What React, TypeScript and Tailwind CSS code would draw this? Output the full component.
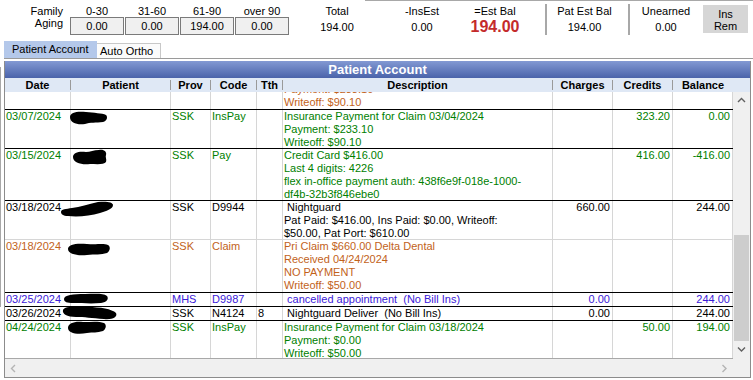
import React from "react";

interface RowData {
  h: string;
  border: string;
  color: string;
  date?: string;
  prov?: string;
  code?: string;
  tth?: string;
  desc: string[];
  charges?: string;
  credits?: string;
  balance?: string;
  blob?: React.ReactNode;
  partial?: boolean;
}

function Blob({ cls, w, h, d }: { cls: string; w: number; h: number; d: string }) {
  return (
    <svg className={`absolute ${cls}`} width={w} height={h} viewBox={`0 0 ${w} ${h}`}>
      <path d={d} fill="#000" />
    </svg>
  );
}

const G = "text-[#008000]";
const O = "text-[#c2621a]";
const B = "text-[#3a20d8]";
const K = "text-black";
const BLACK = "border-b border-black";
const GRAY = "border-b border-[#d6d6d6]";

const rows: RowData[] = [
  { h: "h-[18px]", border: BLACK, color: O, desc: ["Payment: $233.10", "Writeoff: $90.10"], partial: true },
  {
    h: "h-[39px]", border: BLACK, color: G, date: "03/07/2024", prov: "SSK", code: "InsPay",
    desc: ["Insurance Payment for Claim 03/04/2024", "Payment: $233.10", "Writeoff: $90.10"],
    credits: "323.20", balance: "0.00",
    blob: <Blob cls="left-[-3px] top-[1px]" w={40} h={14} d="M2,6 C2,1 10,0 18,1 C26,2 34,2 38,4 C40,6 39,10 35,11 C28,12 22,11 17,13 C9,14 2,12 2,6 Z" />,
  },
  {
    h: "h-[52px]", border: BLACK, color: G, date: "03/15/2024", prov: "SSK", code: "Pay",
    desc: ["Credit Card $416.00", "Last 4 digits: 4226", "flex in-office payment auth: 438f6e9f-018e-1000-", "df4b-32b3f846ebe0"],
    credits: "416.00", balance: "-416.00",
    blob: <Blob cls="left-[1px] top-[0px]" w={36} h={17} d="M1,8 C1,3 8,2 14,3 C18,3 22,1 27,1 C32,0 35,3 34,6 C33,8 35,10 34,13 C32,16 24,15 18,15 C10,16 1,14 1,8 Z" />,
  },
  {
    h: "h-[39px]", border: GRAY, color: K, date: "03/18/2024", prov: "SSK", code: "D9944",
    desc: [" Nightguard", "Pat Paid: $416.00, Ins Paid: $0.00, Writeoff:", "$50.00, Pat Port: $610.00"],
    charges: "660.00", balance: "244.00",
    blob: <Blob cls="left-[-11px] top-[0px]" w={54} h={16} d="M1,11 C1,8 6,8 12,7 C20,6 28,3 38,1 C46,0 53,1 53,4 C53,8 46,10 40,12 C30,15 18,16 8,15 C3,15 1,13 1,11 Z" />,
  },
  {
    h: "h-[53px]", border: BLACK, color: O, date: "03/18/2024", prov: "SSK", code: "Claim",
    desc: ["Pri Claim $660.00 Delta Dental", "Received 04/24/2024", "NO PAYMENT", "Writeoff: $50.00"],
    blob: <Blob cls="left-[-4px] top-[2px]" w={44} h={14} d="M1,7 C1,2 10,1 20,2 C30,3 36,1 41,3 C44,5 43,9 40,11 C34,13 28,12 20,13 C10,14 1,12 1,7 Z" />,
  },
  {
    h: "h-[14px]", border: BLACK, color: B, date: "03/25/2024", prov: "MHS", code: "D9987",
    desc: [" cancelled appointment  (No Bill Ins)"], charges: "0.00", balance: "244.00",
    blob: <Blob cls="left-[-8px] top-[0px]" w={46} h={11} d="M1,6 C1,2 10,1 22,1 C32,1 40,0 44,3 C46,6 44,9 38,10 C28,11 18,10 10,10 C4,10 1,9 1,6 Z" />,
  },
  {
    h: "h-[14px]", border: BLACK, color: K, date: "03/26/2024", prov: "SSK", code: "N4124", tth: "8",
    desc: [" Nightguard Deliver  (No Bill Ins)"], charges: "0.00", balance: "244.00",
    blob: <Blob cls="left-[-9px] top-[-2px]" w={56} h={16} d="M1,5 C2,1 14,1 26,2 C38,2 50,4 54,8 C56,12 50,15 42,14 C30,13 22,12 14,12 C5,12 0,9 1,5 Z" />,
  },
  {
    h: "flex-1 min-h-0", border: "", color: G, date: "04/24/2024", prov: "SSK", code: "InsPay",
    desc: ["Insurance Payment for Claim 03/18/2024", "Payment: $0.00", "Writeoff: $50.00"],
    credits: "50.00", balance: "194.00",
    blob: <Blob cls="left-[-4px] top-[-1px]" w={40} h={15} d="M1,8 C1,3 8,1 16,2 C24,2 32,1 37,3 C40,5 39,9 36,11 C30,13 26,12 20,13 C10,15 1,13 1,8 Z" />,
  },
];

const cell = "shrink-0 border-r border-[#d6d6d6] pl-px overflow-hidden whitespace-pre";
const num = "shrink-0 border-r border-[#d6d6d6] pr-[2px] overflow-hidden whitespace-pre text-right";

function Row({ r }: { r: RowData }) {
  return (
    <div className={`flex shrink-0 overflow-visible ${r.h} ${r.border} ${r.color}`}>
      <div className={`w-[66px] ${cell}`}>{r.date}</div>
      <div className="w-[100px] shrink-0 border-r border-[#d6d6d6] relative">{r.blob}</div>
      <div className={`w-[40px] ${cell}`}>{r.prov}</div>
      <div className={`w-[46px] ${cell}`}>{r.code}</div>
      <div className={`w-[26px] ${cell}`}>{r.tth}</div>
      <div className={`w-[270px] ${cell} ${r.partial ? "flex flex-col justify-end" : ""}`}>
        {r.desc.map((l, i) => (
          <div key={i}>{l}</div>
        ))}
      </div>
      <div className={`w-[60px] ${num}`}>{r.charges}</div>
      <div className={`w-[60px] ${num}`}>{r.credits}</div>
      <div className={`w-[60px] ${num}`}>{r.balance}</div>
    </div>
  );
}

function HCell({ w, label, sep = true }: { w: string; label: string; sep?: boolean }) {
  return (
    <div className={`${w} shrink-0 flex items-center`}>
      <div className="flex-1 text-center">{label}</div>
      {sep && <div className="w-px h-[10px] bg-[#9a9a9a]" />}
    </div>
  );
}

function Chevron({ dir, color }: { dir: "up" | "down" | "left" | "right"; color: string }) {
  const pts =
    dir === "up" ? "1,5 4.5,1.5 8,5" : dir === "down" ? "1,1.5 4.5,5 8,1.5" : dir === "left" ? "5,1 1.5,4.5 5,8" : "1.5,1 5,4.5 1.5,8";
  const w = dir === "up" || dir === "down" ? 9 : 7;
  const h = dir === "up" || dir === "down" ? 7 : 9;
  return (
    <svg width={w} height={h} viewBox={`0 0 ${w} ${h}`}>
      <polyline points={pts} fill="none" stroke={color} strokeWidth="1.4" />
    </svg>
  );
}

function AgeCol({ label, value }: { label: string; value: string }) {
  return (
    <div className="w-[55px] flex flex-col items-start">
      <div className="w-[54px] text-center pt-[5px] leading-[12px]">{label}</div>
      <div className="w-[54px] h-[18px] border border-[#7a7a7a] bg-[#f0f0f0] text-center leading-[16px]">{value}</div>
    </div>
  );
}

export default function App() {
  return (
    <div className="w-[753px] h-[380px] overflow-hidden bg-white text-black text-[11px] font-['Liberation_Sans',Arial,sans-serif] flex flex-col">
      {/* Summary strip */}
      <div className="relative h-[40px] shrink-0 flex">
        <div className="absolute left-[365px] right-0 top-0 h-px bg-[#a8a8a8]" />
        <div className="w-[63px] text-right pt-[5px] leading-[12px]">
          <div>Family</div>
          <div>Aging</div>
        </div>
        <div className="ml-[7px] w-[220px] flex">
          <AgeCol label="0-30" value="0.00" />
          <AgeCol label="31-60" value="0.00" />
          <AgeCol label="61-90" value="194.00" />
          <AgeCol label="over 90" value="0.00" />
        </div>
        <div className="w-[94px] text-center pt-[5px] leading-[12px]">
          <div>Total</div>
          <div className="mt-[4px]">194.00</div>
        </div>
        <div className="w-[76px] text-center pt-[5px] leading-[12px]">
          <div>-InsEst</div>
          <div className="mt-[4px]">0.00</div>
        </div>
        <div className="w-[70px] text-center pt-[5px] leading-[12px]">
          <div>=Est Bal</div>
          <div className="mt-px text-[16px] leading-[18px] font-bold text-[#c42b2b]">194.00</div>
        </div>
        <div className="w-[15px]" />
        <div className="w-[2px] h-[31px] mt-[4px] bg-[#a8a8a8]" />
        <div className="w-[75px] text-center pt-[5px] leading-[12px]">
          <div>Pat Est Bal</div>
          <div className="mt-[4px]">194.00</div>
        </div>
        <div className="w-[6px]" />
        <div className="w-[2px] h-[31px] mt-[4px] bg-[#a8a8a8]" />
        <div className="w-[72px] text-center pt-[5px] leading-[12px]">
          <div>Unearned</div>
          <div className="mt-[4px]">0.00</div>
        </div>
        <div className="ml-px w-[45px] h-[28px] mt-[5px] pt-[3px] bg-[#d6d6d6] text-center leading-[12px]">
          <div>Ins</div>
          <div>Rem</div>
        </div>
      </div>

      {/* Tabs */}
      <div className="h-[18px] shrink-0 flex items-end pl-[4px]">
        <div className="w-[93px] h-[17px] bg-[#b4c8ea] pl-[8px] leading-[17px]">Patient Account</div>
        <div className="w-[64px] h-[15px] bg-[#fbfbfb] border-t border-r border-[#c8c8c8] pl-[3px] leading-[14px]">Auto Ortho</div>
      </div>
      <div className="h-px shrink-0 ml-[4px] bg-[#9a9a9a]" />
      <div className="h-[2px] shrink-0" />

      {/* Grid area */}
      <div className="flex shrink-0">
        <div className="w-[4px] shrink-0">
          <div className="w-px h-[240px] mt-[6px] bg-[#a8a8a8]" />
        </div>
        <div className="w-[747px] h-[317px] border-l border-r border-b border-[#8c8c8c] flex flex-col">
          <div className="h-[17px] shrink-0 bg-linear-to-b from-[#8399d3] to-[#4a63aa] text-white font-bold text-[13px] leading-[17px] text-center">
            Patient Account
          </div>
          <div className="h-[14px] shrink-0 flex bg-[#dfe8f5] font-bold leading-[14px]">
            <HCell w="w-[66px]" label="Date" />
            <HCell w="w-[100px]" label="Patient" />
            <HCell w="w-[40px]" label="Prov" />
            <HCell w="w-[46px]" label="Code" />
            <HCell w="w-[26px]" label="Tth" />
            <HCell w="w-[270px]" label="Description" />
            <HCell w="w-[60px]" label="Charges" />
            <HCell w="w-[60px]" label="Credits" />
            <HCell w="w-[60px]" label="Balance" sep={false} />
            <div className="w-[17px] shrink-0" />
          </div>
          <div className="h-[266px] shrink-0 flex">
            <div className="w-[728px] shrink-0 flex flex-col leading-[13px]">
              {rows.map((r, i) => (
                <Row key={i} r={r} />
              ))}
            </div>
            <div className="w-[17px] shrink-0 bg-[#f0f0f0] flex flex-col">
              <div className="h-[17px] flex items-center justify-center">
                <Chevron dir="up" color="#606060" />
              </div>
              <div className="h-[126px]" />
              <div className="flex-1 mx-px bg-[#cdcdcd]" />
              <div className="h-[17px] flex items-center justify-center">
                <Chevron dir="down" color="#606060" />
              </div>
            </div>
          </div>
          <div className="flex-1 flex">
            <div className="w-[728px] shrink-0 border-t border-[#a8a8a8] bg-[#f0f0f0] flex items-center justify-between px-[5px]">
              <Chevron dir="left" color="#b4b4b4" />
              <Chevron dir="right" color="#b4b4b4" />
            </div>
            <div className="w-[17px] shrink-0 bg-[#f0f0f0]" />
          </div>
        </div>
      </div>
    </div>
  );
}
